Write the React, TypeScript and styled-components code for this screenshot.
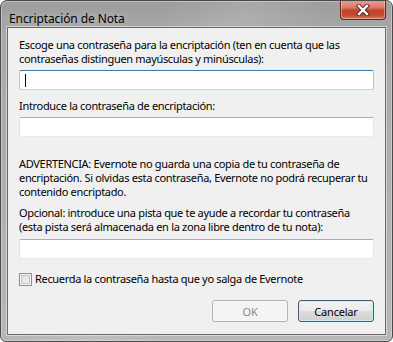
import React from "react";
import styled, { createGlobalStyle } from "styled-components";

const Global = createGlobalStyle`
  html, body { margin: 0; padding: 0; background: #ffffff; }
  body { font-family: "Noto Sans", "DejaVu Sans", sans-serif; }
`;

const Window = styled.div`
  box-sizing: border-box;
  width: 393px;
  height: 342px;
  border: 1px solid #4a4a4a;
  border-radius: 7px 7px 6px 6px;
  background:
    linear-gradient(115deg, rgba(255,255,255,0) 30%, rgba(255,255,255,0.12) 45%, rgba(255,255,255,0) 60%),
    linear-gradient(180deg, #9c9c9c 0px, #a8a8a8 30px, #b6b6b6 100%);
  box-shadow: inset 0 0 0 1px rgba(255, 255, 255, 0.35);
  padding: 0 6px 6px 6px;
  display: flex;
  flex-direction: column;
  overflow: hidden;
`;

const TitleBar = styled.div`
  height: 28px;
  display: flex;
  align-items: flex-start;
  justify-content: space-between;
`;

const Title = styled.span`
  font-family: "Noto Sans", sans-serif;
  font-size: 12px;
  color: #000;
  margin-top: 9px;
  margin-left: 2px;
  letter-spacing: -0.1px;
  text-shadow: 0 0 6px rgba(255,255,255,0.6);
`;

const CloseButton = styled.div`
  box-sizing: border-box;
  width: 46px;
  height: 20px;
  margin-top: -1px;
  border: 1px solid #5e2a22;
  border-top: none;
  border-radius: 0 0 4px 4px;
  background: linear-gradient(180deg, #e5a292 0%, #d87a66 40%, #c2432b 55%, #c64a30 80%, #d97a5c 100%);
  box-shadow: inset 0 0 0 1px rgba(255, 220, 210, 0.45);
  display: flex;
  align-items: center;
  justify-content: center;
`;

const Panel = styled.div`
  flex: 1;
  box-sizing: border-box;
  background: #f0f0f0;
  border: 1px solid #6a6a6a;
  box-shadow: 0 0 0 1px rgba(255, 255, 255, 0.45);
  padding: 10px 10px 12px 11px;
  display: flex;
  flex-direction: column;
  font-family: "Noto Sans", sans-serif;
  font-size: 11px;
  color: #000;
`;

const Label = styled.div<{ $mt?: number }>`
  line-height: 14px;
  margin-top: ${(p) => p.$mt ?? 0}px;
  letter-spacing: -0.32px;
  white-space: nowrap;
`;

const TextBox = styled.div<{ $mt?: number; $focused?: boolean }>`
  box-sizing: border-box;
  height: 20px;
  margin-top: ${(p) => p.$mt ?? 4}px;
  margin-right: 1px;
  background: #fff;
  border-radius: 2px;
  border: 1px solid ${(p) => (p.$focused ? "#a4c9e3" : "#e2e3ea")};
  border-top-color: ${(p) => (p.$focused ? "#3d7bad" : "#abadb3")};
  border-bottom-color: ${(p) => (p.$focused ? "#b7d9ed" : "#e3e9ef")};
  display: flex;
  align-items: center;
  padding-left: 5px;
`;

const Caret = styled.span`
  display: block;
  width: 1px;
  height: 13px;
  background: #000;
`;

const CheckRow = styled.label`
  display: flex;
  align-items: center;
  gap: 3px;
  margin-top: 13px;
  height: 14px;
  line-height: 14px;
  letter-spacing: -0.32px;
`;

const CheckBox = styled.span`
  box-sizing: border-box;
  width: 13px;
  height: 13px;
  border: 1px solid #8e8f8f;
  background: linear-gradient(135deg, #dcdcdc 0%, #f4f4f4 100%);
  box-shadow: inset 0 0 0 1px #f4f4f4, inset 0 0 0 2px #c8c8c8;
`;

const ButtonRow = styled.div`
  display: flex;
  justify-content: flex-end;
  gap: 10px;
  margin-top: 14px;
  margin-right: 1px;
`;

const Button = styled.div<{ $disabled?: boolean; $default?: boolean }>`
  box-sizing: border-box;
  width: 76px;
  height: 22px;
  border-radius: 3px;
  display: flex;
  align-items: center;
  justify-content: center;
  font-size: 11px;
  letter-spacing: -0.2px;
  border: 1px solid ${(p) => (p.$disabled ? "#adb2b5" : p.$default ? "#4c5c6c" : "#707070")};
  color: ${(p) => (p.$disabled ? "#8a8a8a" : "#000")};
  background: ${(p) =>
    p.$disabled
      ? "#f4f4f4"
      : "linear-gradient(180deg, #f2f2f2 0%, #ebebeb 50%, #dddddd 51%, #cfcfcf 100%)"};
  box-shadow: ${(p) =>
    p.$disabled
      ? "inset 0 0 0 1px #f8f8f8"
      : p.$default
      ? "inset 0 0 0 1px #c4ecfb"
      : "inset 0 0 0 1px #fcfcfc"};
`;

const CloseIcon = () => (
  <svg width="14" height="12" viewBox="0 0 14 12">
    <path d="M3 2 L11 10 M11 2 L3 10" stroke="#4a2620" strokeWidth="4.2" strokeLinecap="square" />
    <path d="M3 2 L11 10 M11 2 L3 10" stroke="#ffffff" strokeWidth="2.4" strokeLinecap="square" />
  </svg>
);

export default function App() {
  return (
    <>
      <Global />
      <Window>
        <TitleBar>
          <Title>Encriptación de Nota</Title>
          <CloseButton>
            <CloseIcon />
          </CloseButton>
        </TitleBar>
        <Panel>
          <Label>
            Escoge una contraseña para la encriptación (ten en cuenta que las
            <br />
            contraseñas distinguen mayúsculas y minúsculas):
          </Label>
          <TextBox $focused>
            <Caret />
          </TextBox>
          <Label $mt={9}>Introduce la contraseña de encriptación:</Label>
          <TextBox />
          <Label $mt={20}>
            ADVERTENCIA: Evernote no guarda una copia de tu contraseña de
            <br />
            encriptación. Si olvidas esta contraseña, Evernote no podrá recuperar tu
            <br />
            contenido encriptado.
          </Label>
          <Label $mt={7}>
            Opcional: introduce una pista que te ayude a recordar tu contraseña
            <br />
            (esta pista será almacenada en la zona libre dentro de tu nota):
          </Label>
          <TextBox $mt={5} />
          <CheckRow>
            <CheckBox />
            Recuerda la contraseña hasta que yo salga de Evernote
          </CheckRow>
          <ButtonRow>
            <Button $disabled>OK</Button>
            <Button $default>Cancelar</Button>
          </ButtonRow>
        </Panel>
      </Window>
    </>
  );
}
